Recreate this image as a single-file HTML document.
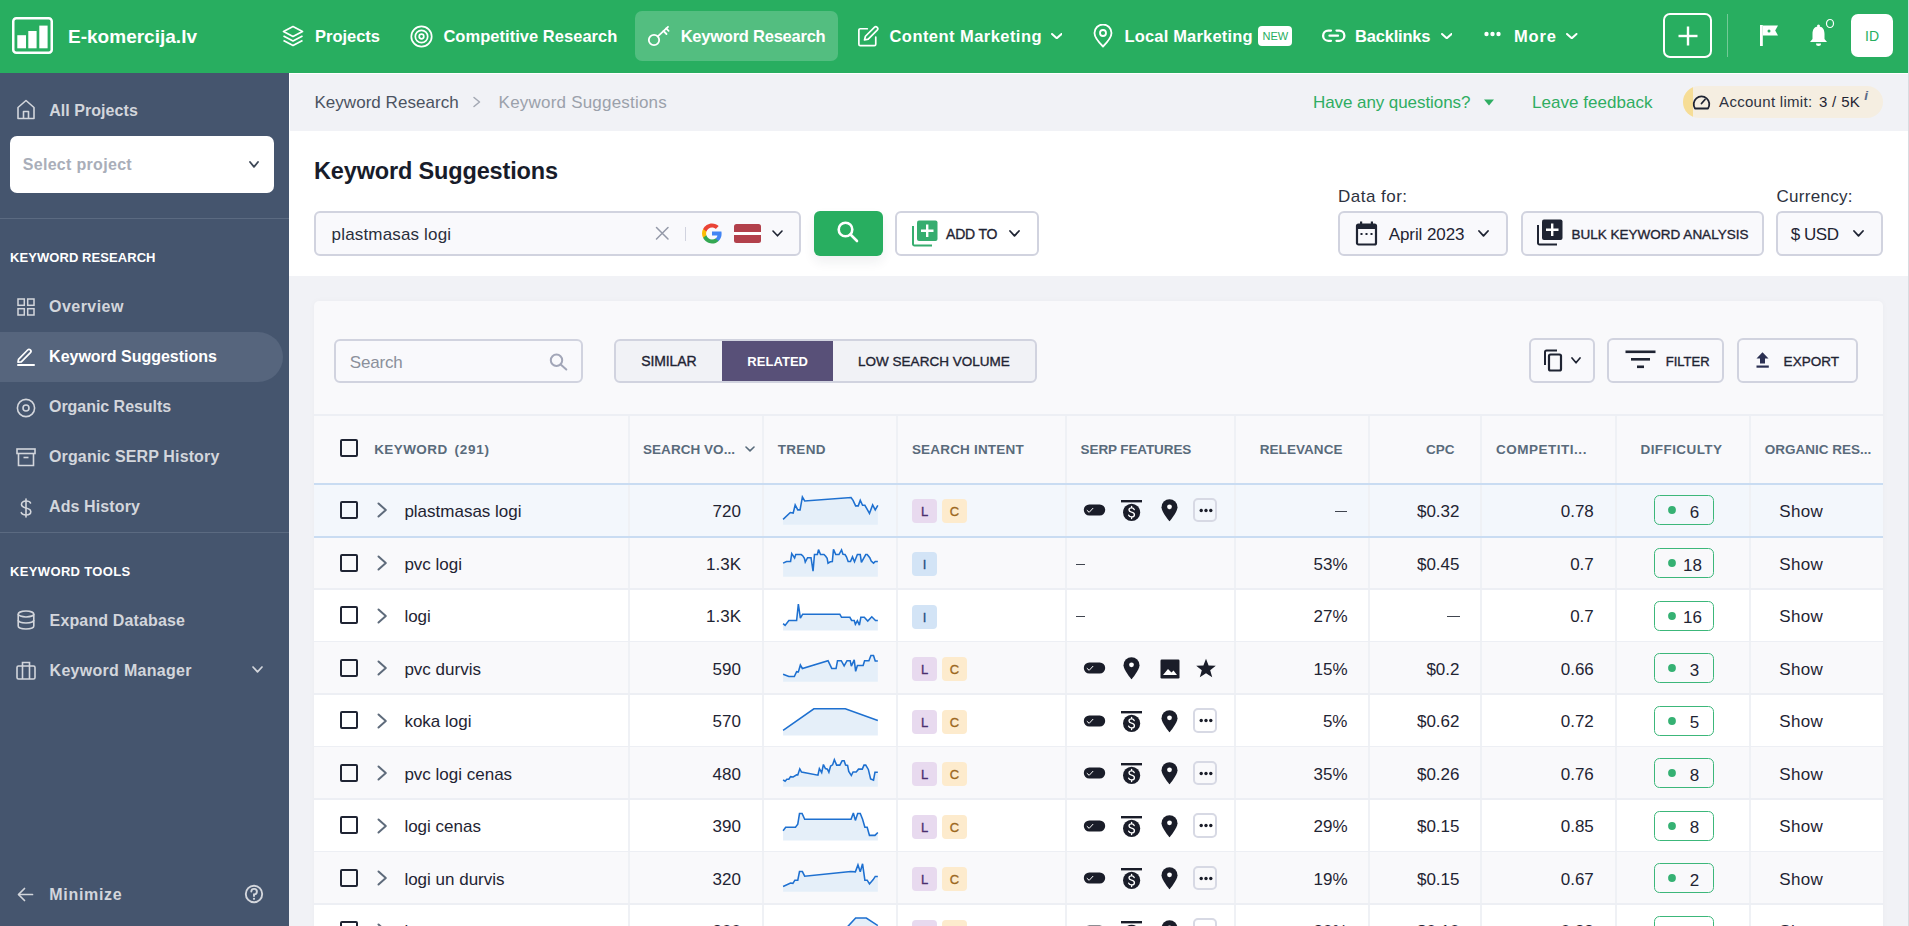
<!DOCTYPE html>
<html><head><meta charset="utf-8"><style>
html,body{margin:0;padding:0;}
body{width:1909px;height:926px;overflow:hidden;position:relative;font-family:"Liberation Sans", sans-serif;background:#f1f2f6;}
</style></head><body>
<div style="position:absolute;left:289px;top:130.5px;width:1619px;height:145.5px;background:#ffffff;"></div>
<div style="position:absolute;left:289px;top:73px;width:1619px;height:0.8px;background:#ffffff;"></div>
<div style="position:absolute;left:289px;top:73px;width:1.2px;height:58px;background:#ffffff;"></div>
<div style="position:absolute;left:1908px;top:0px;width:1px;height:926px;background:#d9dbe0;"></div>
<div style="position:absolute;left:0px;top:0px;width:1908px;height:73px;background:#28ae60;"></div>
<svg style="position:absolute;left:12px;top:17px;" width="41" height="37" viewBox="0 0 41 37"><rect x="1.25" y="1.25" width="38.5" height="34.5" rx="3" fill="none" stroke="#fff" stroke-width="2.5"/><rect x="5.3" y="18.2" width="8.7" height="13.1" fill="#fff"/><rect x="16.3" y="14" width="8.3" height="17.3" fill="#fff"/><rect x="27.3" y="8.6" width="8.3" height="22.7" fill="#fff"/></svg>
<span style="position:absolute;left:68.00px;top:26.62px;font-size:19px;line-height:19px;font-weight:700;color:#fff;letter-spacing:0.012px;white-space:pre;">E-komercija.lv</span>
<svg style="position:absolute;left:282px;top:25px;" width="22" height="22" viewBox="0 0 22 22"><g fill="none" stroke="#fff" stroke-width="1.7" stroke-linejoin="round"><path d="M11 1.5 L20.5 6.5 L11 11.5 L1.5 6.5 Z"/><path d="M1.5 11 L11 16 L20.5 11"/><path d="M1.5 15.5 L11 20.5 L20.5 15.5"/></g></svg>
<span style="position:absolute;left:315.00px;top:28.03px;font-size:16.5px;line-height:16.5px;font-weight:700;color:#fff;letter-spacing:-0.018px;white-space:pre;">Projects</span>
<svg style="position:absolute;left:410px;top:25px;" width="23" height="23" viewBox="0 0 23 23"><g fill="none" stroke="#fff" stroke-width="1.7"><circle cx="11.5" cy="11.5" r="10.2"/><circle cx="11.5" cy="11.5" r="6.2"/><circle cx="11.5" cy="11.5" r="2.3"/></g></svg>
<span style="position:absolute;left:443.40px;top:28.03px;font-size:16.5px;line-height:16.5px;font-weight:700;color:#fff;letter-spacing:0.035px;white-space:pre;">Competitive Research</span>
<div style="position:absolute;left:635px;top:11px;width:203px;height:50px;background:#53be80;border-radius:7px;"></div>
<svg style="position:absolute;left:647px;top:25px;" width="24" height="22" viewBox="0 0 24 22"><g fill="none" stroke="#fff" stroke-width="1.8" stroke-linecap="round"><circle cx="7" cy="15" r="5.2"/><path d="M10.8 11.3 L21 1.8"/><path d="M16.5 6 L19.5 9"/><path d="M19.2 3.4 L21.6 5.8"/></g></svg>
<span style="position:absolute;left:680.70px;top:28.03px;font-size:16.5px;line-height:16.5px;font-weight:700;color:#fff;letter-spacing:-0.239px;white-space:pre;">Keyword Research</span>
<svg style="position:absolute;left:857px;top:24.8px;" width="22.5" height="22.5" viewBox="0 0 24 24"><g fill="none" stroke="#fff" stroke-width="1.8" stroke-linecap="round" stroke-linejoin="round"><path d="M11 4 H3.5 A1.5 1.5 0 0 0 2 5.5 V20.5 A1.5 1.5 0 0 0 3.5 22 H18.5 A1.5 1.5 0 0 0 20 20.5 V13"/><path d="M18.5 2.5 A2.1 2.1 0 0 1 21.5 5.5 L12 15 L8 16 L9 12 Z"/></g></svg>
<span style="position:absolute;left:889.50px;top:28.03px;font-size:16.5px;line-height:16.5px;font-weight:700;color:#fff;letter-spacing:0.447px;white-space:pre;">Content Marketing</span>
<svg style="position:absolute;left:1050.5px;top:32.8px;" width="11.5" height="6.5" viewBox="0 0 11.5 6.5"><path d="M1 1 L5.75 5.3 L10.5 1" fill="none" stroke="#fff" stroke-width="2" stroke-linecap="round" stroke-linejoin="round"/></svg>
<svg style="position:absolute;left:1092px;top:24px;" width="22" height="24" viewBox="0 0 22 24"><g fill="none" stroke="#fff" stroke-width="1.8"><path d="M11 22.5 C11 22.5 2.5 14 2.5 9 A8.5 8.5 0 0 1 19.5 9 C19.5 14 11 22.5 11 22.5 Z" stroke-linejoin="round"/><circle cx="11" cy="9" r="3"/></g></svg>
<span style="position:absolute;left:1124.50px;top:28.03px;font-size:16.5px;line-height:16.5px;font-weight:700;color:#fff;letter-spacing:0.170px;white-space:pre;">Local Marketing</span>
<div style="position:absolute;left:1258px;top:26px;width:34px;height:20px;background:#fff;border-radius:4px;"></div>
<span style="position:absolute;left:1262.46px;top:31.19px;font-size:11px;line-height:11px;font-weight:400;color:#28ae60;white-space:pre;">NEW</span>
<svg style="position:absolute;left:1320.5px;top:26px;" width="26" height="20" viewBox="0 0 26 20"><g fill="none" stroke="#fff" stroke-width="2.3" stroke-linecap="round"><path d="M10 4.6 H7.2 A5.1 5.1 0 0 0 7.2 14.8 H10"/><path d="M15.5 4.6 H18.3 A5.1 5.1 0 0 1 18.3 14.8 H15.5"/><path d="M8.5 9.7 H17"/></g></svg>
<span style="position:absolute;left:1355.00px;top:28.03px;font-size:16.5px;line-height:16.5px;font-weight:700;color:#fff;letter-spacing:-0.193px;white-space:pre;">Backlinks</span>
<svg style="position:absolute;left:1440.5px;top:32.8px;" width="11.5" height="6.5" viewBox="0 0 11.5 6.5"><path d="M1 1 L5.75 5.3 L10.5 1" fill="none" stroke="#fff" stroke-width="2" stroke-linecap="round" stroke-linejoin="round"/></svg>
<svg style="position:absolute;left:1484px;top:31px;" width="17" height="6" viewBox="0 0 17 6"><g fill="#fff"><circle cx="2.5" cy="3" r="2.2"/><circle cx="8.5" cy="3" r="2.2"/><circle cx="14.5" cy="3" r="2.2"/></g></svg>
<span style="position:absolute;left:1514.00px;top:28.03px;font-size:16.5px;line-height:16.5px;font-weight:700;color:#fff;letter-spacing:0.859px;white-space:pre;">More</span>
<svg style="position:absolute;left:1566px;top:32.8px;" width="11.5" height="6.5" viewBox="0 0 11.5 6.5"><path d="M1 1 L5.75 5.3 L10.5 1" fill="none" stroke="#fff" stroke-width="2" stroke-linecap="round" stroke-linejoin="round"/></svg>
<div style="position:absolute;left:1663px;top:13px;width:49px;height:45px;background:transparent;border:2px solid #fff;box-sizing:border-box;border-radius:7px;"></div>
<svg style="position:absolute;left:1677px;top:25px;" width="22" height="22" viewBox="0 0 22 22"><g stroke="#fff" stroke-width="2.4"><path d="M11 1.5 V20.5"/><path d="M1.5 11 H20.5"/></g></svg>
<div style="position:absolute;left:1727px;top:14px;width:1px;height:43px;background:rgba(255,255,255,0.35);"></div>
<svg style="position:absolute;left:1759px;top:24px;" width="20" height="23" viewBox="0 0 20 23"><path d="M1 1 H3.8 V22 H1 Z" fill="#fff"/><path d="M3.8 1.5 H19 L16.2 6.5 L19 11.5 H3.8 Z" fill="#fff"/><circle cx="10" cy="7" r="1.5" fill="#28ae60"/></svg>
<svg style="position:absolute;left:1808px;top:24px;" width="21" height="23" viewBox="0 0 21 23"><path d="M10.5 2.5 C6 2.5 4.5 6 4.5 10 V15 L2 18 H19 L16.5 15 V10 C16.5 6 15 2.5 10.5 2.5 Z" fill="#fff"/><circle cx="10.5" cy="2" r="1.5" fill="#fff"/><path d="M8 19.5 A2.5 2.5 0 0 0 13 19.5 Z" fill="#fff"/></svg>
<svg style="position:absolute;left:1825px;top:18px;" width="11" height="11" viewBox="0 0 11 11"><ellipse cx="5" cy="5.5" rx="3.5" ry="4" fill="none" stroke="#fff" stroke-width="1.2"/></svg>
<div style="position:absolute;left:1851px;top:14px;width:42px;height:43px;background:#fff;border-radius:7px;"></div>
<span style="position:absolute;left:1865.00px;top:29.15px;font-size:14px;line-height:14px;font-weight:400;color:#28ae60;white-space:pre;">ID</span>
<div style="position:absolute;left:0px;top:73px;width:289px;height:853px;background:#45556e;"></div>
<svg style="position:absolute;left:16px;top:99px;" width="20" height="21" viewBox="0 0 20 21"><path d="M2 19.5 V8.5 L10 1.5 L18 8.5 V19.5 Z M7.5 19.5 V12.5 H12.5 V19.5" fill="none" stroke="#d3d6dc" stroke-width="1.6" stroke-linejoin="round"/></svg>
<span style="position:absolute;left:49.20px;top:102.76px;font-size:16px;line-height:16px;font-weight:700;color:#d3d6dc;letter-spacing:0.052px;white-space:pre;">All Projects</span>
<div style="position:absolute;left:10px;top:136px;width:264px;height:57px;background:#fff;border-radius:7px;"></div>
<span style="position:absolute;left:22.70px;top:157.46px;font-size:16px;line-height:16px;font-weight:700;color:#a9aeb9;letter-spacing:0.312px;white-space:pre;">Select project</span>
<svg style="position:absolute;left:249px;top:161px;" width="10" height="7" viewBox="0 0 10 7"><path d="M1 1 L5.0 5.8 L9 1" fill="none" stroke="#3d4756" stroke-width="1.8" stroke-linecap="round" stroke-linejoin="round"/></svg>
<div style="position:absolute;left:0px;top:218px;width:289px;height:1px;background:#5b6a81;"></div>
<span style="position:absolute;left:10.10px;top:250.50px;font-size:13px;line-height:13px;font-weight:700;color:#fff;letter-spacing:0.062px;white-space:pre;">KEYWORD RESEARCH</span>
<div style="position:absolute;left:0px;top:332px;width:283px;height:50px;background:#56657d;border-radius:0 25px 25px 0;"></div>
<svg style="position:absolute;left:17px;top:298px;" width="18" height="18" viewBox="0 0 18 18"><g fill="none" stroke="#d3d6dc" stroke-width="1.5"><rect x="1" y="1" width="6.3" height="6.3"/><rect x="10.7" y="1" width="6.3" height="6.3"/><rect x="1" y="10.7" width="6.3" height="6.3"/><rect x="10.7" y="10.7" width="6.3" height="6.3"/></g></svg>
<span style="position:absolute;left:49.10px;top:299.46px;font-size:16px;line-height:16px;font-weight:700;color:#d3d6dc;letter-spacing:0.449px;white-space:pre;">Overview</span>
<svg style="position:absolute;left:16px;top:347px;" width="20" height="20" viewBox="0 0 20 20"><g fill="none" stroke="#fff" stroke-width="1.7" stroke-linejoin="round" stroke-linecap="round"><path d="M2.5 12.3 L11.6 3 A1.9 1.9 0 0 1 14.4 5.7 L5.3 14.8 L2 15.2 Z"/></g><path d="M2 18 H18" stroke="#fff" stroke-width="2" stroke-linecap="round"/></svg>
<span style="position:absolute;left:49.10px;top:349.46px;font-size:16px;line-height:16px;font-weight:700;color:#fff;letter-spacing:-0.013px;white-space:pre;">Keyword Suggestions</span>
<svg style="position:absolute;left:16px;top:398px;" width="20" height="20" viewBox="0 0 20 20"><g fill="none" stroke="#d3d6dc" stroke-width="1.6"><circle cx="10" cy="10" r="8.6"/><circle cx="10" cy="10" r="3"/></g></svg>
<span style="position:absolute;left:49.00px;top:399.46px;font-size:16px;line-height:16px;font-weight:700;color:#d3d6dc;letter-spacing:-0.036px;white-space:pre;">Organic Results</span>
<svg style="position:absolute;left:16px;top:448px;" width="20" height="19" viewBox="0 0 20 19"><g fill="none" stroke="#d3d6dc" stroke-width="1.6"><rect x="1" y="1" width="18" height="4.5"/><path d="M2.5 5.5 V17.5 H17.5 V5.5"/><path d="M7.5 9.5 H12.5"/></g></svg>
<span style="position:absolute;left:49.00px;top:449.46px;font-size:16px;line-height:16px;font-weight:700;color:#d3d6dc;letter-spacing:0.133px;white-space:pre;">Organic SERP History</span>
<svg style="position:absolute;left:18px;top:498px;" width="16" height="20" viewBox="0 0 16 20"><g fill="none" stroke="#d3d6dc" stroke-width="1.6" stroke-linecap="round"><path d="M8 1 V19"/><path d="M12.5 5 C12 3.5 10.5 3 8 3 C5 3 3.5 4.5 3.5 6.5 C3.5 8.5 5 9.3 8 10 C11 10.7 12.8 11.5 12.8 13.5 C12.8 15.5 11 17 8 17 C5.5 17 4 16.3 3.3 14.7"/></g></svg>
<span style="position:absolute;left:49.00px;top:499.46px;font-size:16px;line-height:16px;font-weight:700;color:#d3d6dc;letter-spacing:0.110px;white-space:pre;">Ads History</span>
<div style="position:absolute;left:0px;top:532px;width:289px;height:1px;background:#5b6a81;"></div>
<span style="position:absolute;left:10.10px;top:565.40px;font-size:13px;line-height:13px;font-weight:700;color:#fff;letter-spacing:0.338px;white-space:pre;">KEYWORD TOOLS</span>
<svg style="position:absolute;left:16px;top:610px;" width="20" height="20" viewBox="0 0 20 20"><g fill="none" stroke="#d3d6dc" stroke-width="1.6"><ellipse cx="10" cy="4" rx="7.8" ry="3"/><path d="M2.2 4 V16 C2.2 17.7 5.7 19 10 19 C14.3 19 17.8 17.7 17.8 16 V4"/><path d="M2.2 10 C2.2 11.7 5.7 13 10 13 C14.3 13 17.8 11.7 17.8 10"/></g></svg>
<span style="position:absolute;left:49.60px;top:613.46px;font-size:16px;line-height:16px;font-weight:700;color:#d3d6dc;letter-spacing:0.144px;white-space:pre;">Expand Database</span>
<svg style="position:absolute;left:16px;top:661px;" width="20" height="19" viewBox="0 0 20 19"><g fill="none" stroke="#d3d6dc" stroke-width="1.6"><rect x="1" y="5" width="18" height="13" rx="1.5"/><path d="M6.5 5 V1.5 H13.5 V5"/><path d="M6.5 5 V18 M13.5 5 V18"/></g></svg>
<span style="position:absolute;left:49.60px;top:663.46px;font-size:16px;line-height:16px;font-weight:700;color:#d3d6dc;letter-spacing:0.285px;white-space:pre;">Keyword Manager</span>
<svg style="position:absolute;left:252px;top:666px;" width="11" height="7" viewBox="0 0 11 7"><path d="M1 1 L5.5 5.8 L10 1" fill="none" stroke="#d3d6dc" stroke-width="1.7" stroke-linecap="round" stroke-linejoin="round"/></svg>
<svg style="position:absolute;left:17px;top:887px;" width="17" height="15" viewBox="0 0 17 15"><g fill="none" stroke="#d3d6dc" stroke-width="1.7" stroke-linecap="round" stroke-linejoin="round"><path d="M15.5 7.5 H2"/><path d="M7.5 1.5 L1.5 7.5 L7.5 13.5"/></g></svg>
<span style="position:absolute;left:49.30px;top:887.46px;font-size:16px;line-height:16px;font-weight:700;color:#d3d6dc;letter-spacing:0.691px;white-space:pre;">Minimize</span>
<svg style="position:absolute;left:244px;top:884px;" width="20" height="20" viewBox="0 0 20 20"><g fill="none" stroke="#d3d6dc" stroke-width="1.9" stroke-linecap="round"><circle cx="10" cy="10" r="8.2"/><path d="M7.3 7.5 A2.8 2.8 0 1 1 10 10.5 V12"/></g><circle cx="10" cy="14.8" r="1.1" fill="#d3d6dc"/></svg>
<span style="position:absolute;left:314.40px;top:93.61px;font-size:17px;line-height:17px;font-weight:400;color:#4b5261;letter-spacing:0.045px;white-space:pre;">Keyword Research</span>
<svg style="position:absolute;left:472px;top:96px;" width="10" height="12" viewBox="0 0 10 12"><path d="M2 1.5 L7.5 6 L2 10.5" fill="none" stroke="#a3a8b3" stroke-width="1.5" stroke-linecap="round" stroke-linejoin="round"/></svg>
<span style="position:absolute;left:498.60px;top:93.61px;font-size:17px;line-height:17px;font-weight:400;color:#9ba1ab;letter-spacing:0.209px;white-space:pre;">Keyword Suggestions</span>
<span style="position:absolute;left:1313.00px;top:93.91px;font-size:17px;line-height:17px;font-weight:400;color:#2fad62;letter-spacing:-0.077px;white-space:pre;">Have any questions?</span>
<svg style="position:absolute;left:1483px;top:98.5px;" width="12" height="8" viewBox="0 0 12 8"><path d="M1 0.5 H11 L6 6.5 Z" fill="#2fad62"/></svg>
<span style="position:absolute;left:1532.00px;top:93.91px;font-size:17px;line-height:17px;font-weight:400;color:#2fad62;letter-spacing:0.043px;white-space:pre;">Leave feedback</span>
<div style="position:absolute;left:1683px;top:86px;width:200px;height:32px;border-radius:16px;background:#f5eee1;overflow:hidden"><div style="position:absolute;left:0;top:0;width:10px;height:32px;background:#f6dd96"></div></div>
<svg style="position:absolute;left:1692px;top:93px;" width="19" height="17" viewBox="0 0 19 17"><g fill="none" stroke="#1f2433" stroke-width="1.8" stroke-linecap="round"><path d="M3 15.5 A7.8 7.8 0 1 1 16 15.5 Z" stroke-linejoin="round"/><path d="M9.5 10.5 L13 6.5"/></g></svg>
<span style="position:absolute;left:1719.10px;top:94.30px;font-size:15px;line-height:15px;font-weight:400;color:#2d3240;letter-spacing:0.292px;white-space:pre;">Account limit:</span>
<span style="position:absolute;left:1818.90px;top:94.30px;font-size:15px;line-height:15px;font-weight:400;color:#1f2433;letter-spacing:0.359px;white-space:pre;">3 / 5K</span>
<span style="position:absolute;left:1864.20px;top:89.07px;font-size:13.5px;line-height:13.5px;font-weight:700;color:#5b6b8a;white-space:pre;font-style:italic;">i</span>
<span style="position:absolute;left:314.00px;top:159.91px;font-size:23.5px;line-height:23.5px;font-weight:700;color:#181c2a;letter-spacing:-0.155px;white-space:pre;">Keyword Suggestions</span>
<div style="position:absolute;left:314px;top:211px;width:487px;height:45px;background:#f9f9fc;border:2px solid #d1d3df;box-sizing:border-box;border-radius:6px;"></div>
<span style="position:absolute;left:331.60px;top:225.61px;font-size:17px;line-height:17px;font-weight:400;color:#2a2f3c;letter-spacing:0.166px;white-space:pre;">plastmasas logi</span>
<svg style="position:absolute;left:655px;top:226px;" width="15" height="15" viewBox="0 0 15 15"><g stroke="#9499a8" stroke-width="1.5" stroke-linecap="round"><path d="M1.5 1.5 L13 13 M13 1.5 L1.5 13"/></g></svg>
<div style="position:absolute;left:685px;top:227px;width:1px;height:14px;background:#d1d3df;"></div>
<svg style="position:absolute;left:701px;top:223px;" width="22" height="21" viewBox="0 0 22 21"><path d="M20.6 10.7 C20.6 9.9 20.5 9.3 20.4 8.6 H11 V12.4 H16.4 C16.2 13.6 15.5 14.7 14.4 15.4 V17.9 H17.6 C19.5 16.2 20.6 13.700 20.6 10.7 Z" fill="#4285F4"/><path d="M11 20.5 C13.7 20.5 16 19.600 17.6 17.9 L14.4 15.4 C13.5 16 12.400 16.4 11 16.4 C8.4 16.4 6.2 14.600 5.4 12.2 H2.100 V14.8 C3.700 18.100 7.1 20.5 11 20.5 Z" fill="#34A853"/><path d="M5.4 12.2 C5.2 11.6 5.1 11 5.1 10.4 C5.1 9.8 5.2 9.2 5.4 8.6 V6 H2.1 C1.4 7.3 1 8.8 1 10.400 C1 12 1.400 13.500 2.100 14.800 Z" fill="#FBBC05"/><path d="M11 4.4 C12.5 4.4 13.8 4.900 14.800 5.900 L17.700 3 C16 1.4 13.700 0.4 11 0.4 C7.1 0.4 3.7 2.700 2.100 6 L5.400 8.600 C6.200 6.200 8.4 4.4 11 4.4 Z" fill="#EA4335"/></svg>
<div style="position:absolute;left:734px;top:224px;width:27px;height:19px;border-radius:2.5px;overflow:hidden;background:#b2404b"><div style="position:absolute;left:0;top:7.8px;width:27px;height:3.4px;background:#fff"></div></div>
<svg style="position:absolute;left:771.5px;top:229.5px;" width="11" height="7" viewBox="0 0 11 7"><path d="M1 1 L5.5 5.8 L10 1" fill="none" stroke="#1f2433" stroke-width="1.6" stroke-linecap="round" stroke-linejoin="round"/></svg>
<div style="position:absolute;left:814px;top:211px;width:69px;height:45px;background:#28ae60;border-radius:6px;box-shadow:0 6px 12px rgba(30,40,60,0.07);"></div>
<svg style="position:absolute;left:837px;top:221px;" width="22" height="23" viewBox="0 0 22 23"><g fill="none" stroke="#fff" stroke-width="2.6" stroke-linecap="round"><circle cx="8.5" cy="8.5" r="6.8"/><path d="M13.5 13.5 L20 20"/></g></svg>
<div style="position:absolute;left:895px;top:211px;width:144px;height:45px;background:#ffffff;border:2px solid #d1d3df;box-sizing:border-box;border-radius:6px;"></div>
<svg style="position:absolute;left:911px;top:219.3px;" width="28" height="28" viewBox="0 0 28 28"><path d="M2 7 V25 A1.5 1.5 0 0 0 3.5 26.5 H21" fill="none" stroke="#36ad6f" stroke-width="2"/><rect x="6" y="1.5" width="20.5" height="20.5" rx="2" fill="#36ad6f"/><path d="M16.2 5.5 V18 M10 11.7 H22.5" stroke="#fff" stroke-width="2.4"/></svg>
<span style="position:absolute;left:946.00px;top:227.15px;font-size:14px;line-height:14px;font-weight:400;color:#1f2433;letter-spacing:-0.178px;white-space:pre;-webkit-text-stroke:0.35px #1f2433;">ADD TO</span>
<svg style="position:absolute;left:1009px;top:230px;" width="11" height="7" viewBox="0 0 11 7"><path d="M1 1 L5.5 5.8 L10 1" fill="none" stroke="#1f2433" stroke-width="1.8" stroke-linecap="round" stroke-linejoin="round"/></svg>
<span style="position:absolute;left:1338.00px;top:187.61px;font-size:17px;line-height:17px;font-weight:400;color:#2d3240;letter-spacing:0.475px;white-space:pre;">Data for:</span>
<div style="position:absolute;left:1338px;top:211px;width:170px;height:45px;background:#f9f9fc;border:2px solid #d1d3df;box-sizing:border-box;border-radius:6px;"></div>
<svg style="position:absolute;left:1355px;top:221px;" width="25" height="26" viewBox="0 0 25 26"><g fill="#1f2433"><rect x="5" y="0.5" width="2.2" height="5"/><rect x="15.8" y="0.5" width="2.2" height="5"/></g><rect x="2" y="3.5" width="19" height="20" rx="1.5" fill="none" stroke="#1f2433" stroke-width="2.2"/><rect x="2" y="3.5" width="19" height="4.5" fill="#1f2433"/><g fill="#1f2433"><rect x="5.5" y="12" width="2" height="2"/><rect x="10.5" y="12" width="2" height="2"/><rect x="15.5" y="12" width="2" height="2"/></g></svg>
<span style="position:absolute;left:1388.70px;top:225.91px;font-size:17px;line-height:17px;font-weight:400;color:#1f2433;letter-spacing:-0.085px;white-space:pre;">April 2023</span>
<svg style="position:absolute;left:1478px;top:230px;" width="11" height="7" viewBox="0 0 11 7"><path d="M1 1 L5.5 5.8 L10 1" fill="none" stroke="#1f2433" stroke-width="1.8" stroke-linecap="round" stroke-linejoin="round"/></svg>
<div style="position:absolute;left:1521px;top:211px;width:243px;height:45px;background:#f9f9fc;border:2px solid #d1d3df;box-sizing:border-box;border-radius:6px;"></div>
<svg style="position:absolute;left:1536px;top:218px;" width="28" height="28" viewBox="0 0 28 28"><path d="M2 7 V25 A1.5 1.5 0 0 0 3.5 26.5 H21" fill="none" stroke="#1f2433" stroke-width="2"/><rect x="6" y="1.5" width="20.5" height="20.5" rx="2" fill="#1f2433"/><path d="M16.2 5.5 V18 M10 11.7 H22.5" stroke="#fff" stroke-width="2.4"/></svg>
<span style="position:absolute;left:1571.60px;top:228.27px;font-size:13.5px;line-height:13.5px;font-weight:400;color:#1f2433;white-space:pre;-webkit-text-stroke:0.35px #1f2433;">BULK KEYWORD ANALYSIS</span>
<span style="position:absolute;left:1776.50px;top:187.61px;font-size:17px;line-height:17px;font-weight:400;color:#2d3240;letter-spacing:0.289px;white-space:pre;">Currency:</span>
<div style="position:absolute;left:1776px;top:211px;width:107px;height:45px;background:#f9f9fc;border:2px solid #d1d3df;box-sizing:border-box;border-radius:6px;"></div>
<span style="position:absolute;left:1790.70px;top:225.91px;font-size:17px;line-height:17px;font-weight:400;color:#1f2433;letter-spacing:-0.445px;white-space:pre;">$ USD</span>
<svg style="position:absolute;left:1853px;top:230px;" width="11" height="7" viewBox="0 0 11 7"><path d="M1 1 L5.5 5.8 L10 1" fill="none" stroke="#1f2433" stroke-width="1.8" stroke-linecap="round" stroke-linejoin="round"/></svg>
<div style="position:absolute;left:314px;top:301px;width:1569px;height:640px;background:#f9f9fb;border-radius:5px;box-shadow:0 0 6px rgba(0,0,0,0.03);"></div>
<div style="position:absolute;left:333.5px;top:338.5px;width:249.5px;height:44.3px;background:#f9f9fc;border:2px solid #d1d3df;box-sizing:border-box;border-radius:6px;"></div>
<span style="position:absolute;left:349.80px;top:354.11px;font-size:17px;line-height:17px;font-weight:400;color:#8b909b;letter-spacing:-0.175px;white-space:pre;">Search</span>
<svg style="position:absolute;left:549px;top:352.5px;" width="20" height="20" viewBox="0 0 20 20"><g fill="none" stroke="#a2a6b8" stroke-width="2" stroke-linecap="round"><circle cx="7.5" cy="7.2" r="5.7"/><path d="M11.7 11.5 L17.3 16.5"/></g></svg>
<div style="position:absolute;left:614px;top:339px;width:423px;height:44px;background:#f1f2f6;border:2px solid #d1d3df;box-sizing:border-box;border-radius:6px;"></div>
<div style="position:absolute;left:722px;top:341px;width:111px;height:40px;background:#585078;"></div>
<span style="position:absolute;left:641.20px;top:354.25px;font-size:14px;line-height:14px;font-weight:400;color:#1f2433;letter-spacing:-0.086px;white-space:pre;-webkit-text-stroke:0.35px #1f2433;">SIMILAR</span>
<span style="position:absolute;left:747.30px;top:355.10px;font-size:13px;line-height:13px;font-weight:700;color:#fff;letter-spacing:0.044px;white-space:pre;">RELATED</span>
<span style="position:absolute;left:858.00px;top:354.67px;font-size:13.5px;line-height:13.5px;font-weight:400;color:#1f2433;letter-spacing:0.017px;white-space:pre;-webkit-text-stroke:0.35px #1f2433;">LOW SEARCH VOLUME</span>
<div style="position:absolute;left:1529px;top:338px;width:66px;height:45px;background:#f9f9fc;border:2px solid #d1d3df;box-sizing:border-box;border-radius:6px;"></div>
<svg style="position:absolute;left:1543px;top:349px;" width="22" height="24" viewBox="0 0 22 24"><path d="M2 16 V3 A1.5 1.5 0 0 1 3.5 1.5 H14" fill="none" stroke="#1f2433" stroke-width="2"/><rect x="6" y="5.5" width="12" height="16" rx="1.5" fill="none" stroke="#1f2433" stroke-width="2.2"/></svg>
<svg style="position:absolute;left:1571px;top:357px;" width="10" height="7" viewBox="0 0 10 7"><path d="M1 1 L5.0 5.8 L9 1" fill="none" stroke="#1f2433" stroke-width="1.7" stroke-linecap="round" stroke-linejoin="round"/></svg>
<div style="position:absolute;left:1607px;top:338px;width:117px;height:45px;background:#f9f9fc;border:2px solid #d1d3df;box-sizing:border-box;border-radius:6px;"></div>
<svg style="position:absolute;left:1625px;top:350px;" width="31" height="20" viewBox="0 0 31 20"><g fill="#1f2433"><rect x="0.5" y="0.5" width="30" height="2.6"/><rect x="6" y="8" width="19" height="2.6"/><rect x="12" y="15.5" width="7" height="2.6"/></g></svg>
<span style="position:absolute;left:1665.70px;top:355.10px;font-size:13px;line-height:13px;font-weight:400;color:#1f2433;letter-spacing:0.034px;white-space:pre;-webkit-text-stroke:0.35px #1f2433;">FILTER</span>
<div style="position:absolute;left:1737px;top:338px;width:121px;height:45px;background:#f9f9fc;border:2px solid #d1d3df;box-sizing:border-box;border-radius:6px;"></div>
<svg style="position:absolute;left:1755px;top:351px;" width="15" height="18" viewBox="0 0 15 18"><path d="M7.5 1.3 L13.5 7.5 H10 V12.5 H5 V7.5 H1.5 Z" fill="#2b3052"/><rect x="1.5" y="14.5" width="12.3" height="2.2" fill="#2b3052"/></svg>
<span style="position:absolute;left:1783.60px;top:354.67px;font-size:13.5px;line-height:13.5px;font-weight:400;color:#1f2433;letter-spacing:0.027px;white-space:pre;-webkit-text-stroke:0.35px #1f2433;">EXPORT</span>
<div style="position:absolute;left:314px;top:414px;width:1569px;height:2px;background:#edeff4;"></div>
<div style="position:absolute;left:340px;top:439px;width:18px;height:18px;background:transparent;border:2px solid #1f2433;box-sizing:border-box;border-radius:2px;"></div>
<span style="position:absolute;left:374.20px;top:442.87px;font-size:13.5px;line-height:13.5px;font-weight:700;color:#596b7b;letter-spacing:0.417px;white-space:pre;">KEYWORD</span>
<span style="position:absolute;left:454.50px;top:442.87px;font-size:13.5px;line-height:13.5px;font-weight:700;color:#596b7b;letter-spacing:0.746px;white-space:pre;">(291)</span>
<span style="position:absolute;left:643.00px;top:442.87px;font-size:13.5px;line-height:13.5px;font-weight:700;color:#596b7b;letter-spacing:0.044px;white-space:pre;">SEARCH VO...</span>
<svg style="position:absolute;left:745px;top:446px;" width="10" height="6" viewBox="0 0 10 6"><path d="M1 1 L5.0 4.8 L9 1" fill="none" stroke="#596b7b" stroke-width="1.6" stroke-linecap="round" stroke-linejoin="round"/></svg>
<span style="position:absolute;left:777.70px;top:442.87px;font-size:13.5px;line-height:13.5px;font-weight:700;color:#596b7b;letter-spacing:0.325px;white-space:pre;">TREND</span>
<span style="position:absolute;left:911.90px;top:442.87px;font-size:13.5px;line-height:13.5px;font-weight:700;color:#596b7b;letter-spacing:0.190px;white-space:pre;">SEARCH INTENT</span>
<span style="position:absolute;left:1080.60px;top:442.87px;font-size:13.5px;line-height:13.5px;font-weight:700;color:#596b7b;letter-spacing:-0.111px;white-space:pre;">SERP FEATURES</span>
<span style="position:absolute;left:1259.70px;top:442.87px;font-size:13.5px;line-height:13.5px;font-weight:700;color:#596b7b;letter-spacing:0.067px;white-space:pre;">RELEVANCE</span>
<span style="position:absolute;left:1426.00px;top:442.87px;font-size:13.5px;line-height:13.5px;font-weight:700;color:#596b7b;letter-spacing:0.042px;white-space:pre;">CPC</span>
<span style="position:absolute;left:1496.00px;top:442.87px;font-size:13.5px;line-height:13.5px;font-weight:700;color:#596b7b;letter-spacing:0.512px;white-space:pre;">COMPETITI...</span>
<span style="position:absolute;left:1640.50px;top:442.87px;font-size:13.5px;line-height:13.5px;font-weight:700;color:#596b7b;letter-spacing:0.417px;white-space:pre;">DIFFICULTY</span>
<span style="position:absolute;left:1764.70px;top:442.87px;font-size:13.5px;line-height:13.5px;font-weight:700;color:#596b7b;white-space:pre;">ORGANIC RES...</span>
<div style="position:absolute;left:314px;top:484px;width:1569px;height:52.5px;background:#f3f7fc;"></div>
<div style="position:absolute;left:314px;top:537px;width:1569px;height:52.5px;background:#f9f9fb;"></div>
<div style="position:absolute;left:314px;top:589.0px;width:1569px;height:52.5px;background:#ffffff;"></div>
<div style="position:absolute;left:314px;top:641.5px;width:1569px;height:52.5px;background:#f9f9fb;"></div>
<div style="position:absolute;left:314px;top:694.0px;width:1569px;height:52.5px;background:#ffffff;"></div>
<div style="position:absolute;left:314px;top:746.5px;width:1569px;height:52.5px;background:#f9f9fb;"></div>
<div style="position:absolute;left:314px;top:799.0px;width:1569px;height:52.5px;background:#ffffff;"></div>
<div style="position:absolute;left:314px;top:851.5px;width:1569px;height:52.5px;background:#f9f9fb;"></div>
<div style="position:absolute;left:314px;top:904.0px;width:1569px;height:52.5px;background:#ffffff;"></div>
<div style="position:absolute;left:628.2px;top:416px;width:1.7px;height:510px;background:#eff1f5;"></div>
<div style="position:absolute;left:762.2px;top:416px;width:1.7px;height:510px;background:#eff1f5;"></div>
<div style="position:absolute;left:896.2px;top:416px;width:1.7px;height:510px;background:#eff1f5;"></div>
<div style="position:absolute;left:1065.2px;top:416px;width:1.7px;height:510px;background:#eff1f5;"></div>
<div style="position:absolute;left:1234.2px;top:416px;width:1.7px;height:510px;background:#eff1f5;"></div>
<div style="position:absolute;left:1368.2px;top:416px;width:1.7px;height:510px;background:#eff1f5;"></div>
<div style="position:absolute;left:1480.2px;top:416px;width:1.7px;height:510px;background:#eff1f5;"></div>
<div style="position:absolute;left:1615.2px;top:416px;width:1.7px;height:510px;background:#eff1f5;"></div>
<div style="position:absolute;left:1749.2px;top:416px;width:1.7px;height:510px;background:#eff1f5;"></div>
<div style="position:absolute;left:314px;top:483.3px;width:1569px;height:2px;background:#c9dcf2;"></div>
<div style="position:absolute;left:314px;top:536.2px;width:1569px;height:2px;background:#c9dcf2;"></div>
<div style="position:absolute;left:314px;top:588.25px;width:1569px;height:1.5px;background:#edeff4;"></div>
<div style="position:absolute;left:314px;top:640.75px;width:1569px;height:1.5px;background:#edeff4;"></div>
<div style="position:absolute;left:314px;top:693.25px;width:1569px;height:1.5px;background:#edeff4;"></div>
<div style="position:absolute;left:314px;top:745.75px;width:1569px;height:1.5px;background:#edeff4;"></div>
<div style="position:absolute;left:314px;top:798.25px;width:1569px;height:1.5px;background:#edeff4;"></div>
<div style="position:absolute;left:314px;top:850.75px;width:1569px;height:1.5px;background:#edeff4;"></div>
<div style="position:absolute;left:314px;top:903.25px;width:1569px;height:1.5px;background:#edeff4;"></div>
<div style="position:absolute;left:340px;top:500.8px;width:18px;height:18px;background:transparent;border:2px solid #1f2433;box-sizing:border-box;border-radius:2px;"></div>
<svg style="position:absolute;left:376px;top:502px;" width="13" height="16" viewBox="0 0 13 16"><path d="M2.5 1.5 L9.8 8 L2.5 14.5" fill="none" stroke="#5e6b7b" stroke-width="2" stroke-linecap="round" stroke-linejoin="round"/></svg>
<span style="position:absolute;left:404.40px;top:502.61px;font-size:17px;line-height:17px;font-weight:400;color:#1f2433;white-space:pre;">plastmasas logi</span>
<span style="position:absolute;left:712.62px;top:502.61px;font-size:17px;line-height:17px;font-weight:400;color:#1f2433;white-space:pre;">720</span>
<div style="position:absolute;left:912px;top:499px;width:25px;height:24px;background:#e8daef;border-radius:4px;"></div>
<span style="position:absolute;left:920.88px;top:505.00px;font-size:13px;line-height:13px;font-weight:400;color:#4b2f6f;white-space:pre;-webkit-text-stroke:0.3px #4b2f6f;">L</span>
<div style="position:absolute;left:942px;top:499px;width:25px;height:24px;background:#fdebcd;border-radius:4px;"></div>
<span style="position:absolute;left:949.80px;top:505.00px;font-size:13px;line-height:13px;font-weight:400;color:#9c6820;white-space:pre;-webkit-text-stroke:0.3px #9c6820;">C</span>
<svg style="position:absolute;left:1083px;top:504.3px;" width="23" height="12" viewBox="0 0 23 12"><rect x="0.8" y="0.5" width="21.4" height="11" rx="5.5" fill="#1a1d29"/><path d="M3.8 6.2 L6.2 8.3 L10.2 4" fill="none" stroke="#fff" stroke-width="1"/></svg>
<svg style="position:absolute;left:1120px;top:500px;" width="22" height="22" viewBox="0 0 22 22"><rect x="1" y="-0.2" width="21" height="2.6" fill="#1a1d29"/><circle cx="11.6" cy="12.4" r="8.6" fill="#1a1d29"/><path d="M14.2 9.6 C13.8 8.5 12.8 7.9 11.6 7.9 C10 7.9 9 8.8 9 10 C9 11.3 10.2 11.8 11.6 12.2 C13.2 12.6 14.4 13.2 14.4 14.7 C14.4 16 13.2 16.9 11.6 16.9 C10.2 16.9 9.1 16.3 8.7 15.2 M11.6 6.3 V7.9 M11.6 16.9 V18.5" fill="none" stroke="#fff" stroke-width="1.35" stroke-linecap="round"/></svg>
<svg style="position:absolute;left:1160.5px;top:499.1px;" width="17" height="23" viewBox="0 0 17 23"><path d="M8.5 22.3 C8.5 22.3 0.5 13 0.5 8.2 A8 8 0 0 1 16.5 8.2 C16.5 13 8.5 22.3 8.5 22.3 Z" fill="#1a1d29"/><circle cx="8.5" cy="7.8" r="2.4" fill="#fff"/></svg>
<div style="position:absolute;left:1193.2px;top:497.7px;width:24.3px;height:24.6px;background:transparent;border:2px solid #d7d9e4;box-sizing:border-box;border-radius:5px;"></div>
<svg style="position:absolute;left:1198.5px;top:507.5px;" width="14" height="5" viewBox="0 0 14 5"><g fill="#1a1d29"><circle cx="2.2" cy="2.5" r="1.7"/><circle cx="7" cy="2.5" r="1.7"/><circle cx="11.8" cy="2.5" r="1.7"/></g></svg>
<div style="position:absolute;left:1334.5px;top:511px;width:12.5px;height:1.3px;background:#40454f;"></div>
<span style="position:absolute;left:1416.95px;top:502.61px;font-size:17px;line-height:17px;font-weight:400;color:#1f2433;white-space:pre;">$0.32</span>
<span style="position:absolute;left:1560.71px;top:502.61px;font-size:17px;line-height:17px;font-weight:400;color:#1f2433;white-space:pre;">0.78</span>
<div style="position:absolute;left:1654px;top:495.3px;width:60px;height:30px;background:transparent;border:1.5px solid #3cb77a;box-sizing:border-box;border-radius:5.5px;"></div>
<svg style="position:absolute;left:1668px;top:506px;" width="8" height="8" viewBox="0 0 8 8"><circle cx="4" cy="4" r="3.9" fill="#35b173"/></svg>
<span style="position:absolute;left:1689.77px;top:503.61px;font-size:17px;line-height:17px;font-weight:400;color:#1f2433;white-space:pre;">6</span>
<span style="position:absolute;left:1779.30px;top:502.61px;font-size:17px;line-height:17px;font-weight:400;color:#1f2433;letter-spacing:0.323px;white-space:pre;">Show</span>
<div style="position:absolute;left:340px;top:553.8px;width:18px;height:18px;background:transparent;border:2px solid #1f2433;box-sizing:border-box;border-radius:2px;"></div>
<svg style="position:absolute;left:376px;top:555px;" width="13" height="16" viewBox="0 0 13 16"><path d="M2.5 1.5 L9.8 8 L2.5 14.5" fill="none" stroke="#5e6b7b" stroke-width="2" stroke-linecap="round" stroke-linejoin="round"/></svg>
<span style="position:absolute;left:404.40px;top:555.61px;font-size:17px;line-height:17px;font-weight:400;color:#1f2433;white-space:pre;">pvc logi</span>
<span style="position:absolute;left:706.02px;top:555.61px;font-size:17px;line-height:17px;font-weight:400;color:#1f2433;white-space:pre;">1.3K</span>
<div style="position:absolute;left:912px;top:552px;width:25px;height:24px;background:#d3e4f6;border-radius:4px;"></div>
<span style="position:absolute;left:922.69px;top:558.00px;font-size:13px;line-height:13px;font-weight:400;color:#254f80;white-space:pre;-webkit-text-stroke:0.3px #254f80;">I</span>
<div style="position:absolute;left:1076px;top:564px;width:9px;height:1.3px;background:#40454f;"></div>
<span style="position:absolute;left:1313.47px;top:555.61px;font-size:17px;line-height:17px;font-weight:400;color:#1f2433;white-space:pre;">53%</span>
<span style="position:absolute;left:1416.95px;top:555.61px;font-size:17px;line-height:17px;font-weight:400;color:#1f2433;white-space:pre;">$0.45</span>
<span style="position:absolute;left:1570.16px;top:555.61px;font-size:17px;line-height:17px;font-weight:400;color:#1f2433;white-space:pre;">0.7</span>
<div style="position:absolute;left:1654px;top:548.3px;width:60px;height:30px;background:transparent;border:1.5px solid #3cb77a;box-sizing:border-box;border-radius:5.5px;"></div>
<svg style="position:absolute;left:1668px;top:559px;" width="8" height="8" viewBox="0 0 8 8"><circle cx="4" cy="4" r="3.9" fill="#35b173"/></svg>
<span style="position:absolute;left:1683.04px;top:556.61px;font-size:17px;line-height:17px;font-weight:400;color:#1f2433;white-space:pre;">18</span>
<span style="position:absolute;left:1779.30px;top:555.61px;font-size:17px;line-height:17px;font-weight:400;color:#1f2433;letter-spacing:0.323px;white-space:pre;">Show</span>
<div style="position:absolute;left:340px;top:606.3px;width:18px;height:18px;background:transparent;border:2px solid #1f2433;box-sizing:border-box;border-radius:2px;"></div>
<svg style="position:absolute;left:376px;top:607.5px;" width="13" height="16" viewBox="0 0 13 16"><path d="M2.5 1.5 L9.8 8 L2.5 14.5" fill="none" stroke="#5e6b7b" stroke-width="2" stroke-linecap="round" stroke-linejoin="round"/></svg>
<span style="position:absolute;left:404.40px;top:608.11px;font-size:17px;line-height:17px;font-weight:400;color:#1f2433;white-space:pre;">logi</span>
<span style="position:absolute;left:706.02px;top:608.11px;font-size:17px;line-height:17px;font-weight:400;color:#1f2433;white-space:pre;">1.3K</span>
<div style="position:absolute;left:912px;top:604.5px;width:25px;height:24px;background:#d3e4f6;border-radius:4px;"></div>
<span style="position:absolute;left:922.69px;top:610.50px;font-size:13px;line-height:13px;font-weight:400;color:#254f80;white-space:pre;-webkit-text-stroke:0.3px #254f80;">I</span>
<div style="position:absolute;left:1076px;top:616px;width:9px;height:1.3px;background:#40454f;"></div>
<span style="position:absolute;left:1313.47px;top:608.11px;font-size:17px;line-height:17px;font-weight:400;color:#1f2433;white-space:pre;">27%</span>
<div style="position:absolute;left:1447px;top:616px;width:12.5px;height:1.3px;background:#40454f;"></div>
<span style="position:absolute;left:1570.16px;top:608.11px;font-size:17px;line-height:17px;font-weight:400;color:#1f2433;white-space:pre;">0.7</span>
<div style="position:absolute;left:1654px;top:600.8px;width:60px;height:30px;background:transparent;border:1.5px solid #3cb77a;box-sizing:border-box;border-radius:5.5px;"></div>
<svg style="position:absolute;left:1668px;top:611.5px;" width="8" height="8" viewBox="0 0 8 8"><circle cx="4" cy="4" r="3.9" fill="#35b173"/></svg>
<span style="position:absolute;left:1683.04px;top:609.11px;font-size:17px;line-height:17px;font-weight:400;color:#1f2433;white-space:pre;">16</span>
<span style="position:absolute;left:1779.30px;top:608.11px;font-size:17px;line-height:17px;font-weight:400;color:#1f2433;letter-spacing:0.323px;white-space:pre;">Show</span>
<div style="position:absolute;left:340px;top:658.8px;width:18px;height:18px;background:transparent;border:2px solid #1f2433;box-sizing:border-box;border-radius:2px;"></div>
<svg style="position:absolute;left:376px;top:660px;" width="13" height="16" viewBox="0 0 13 16"><path d="M2.5 1.5 L9.8 8 L2.5 14.5" fill="none" stroke="#5e6b7b" stroke-width="2" stroke-linecap="round" stroke-linejoin="round"/></svg>
<span style="position:absolute;left:404.40px;top:660.61px;font-size:17px;line-height:17px;font-weight:400;color:#1f2433;white-space:pre;">pvc durvis</span>
<span style="position:absolute;left:712.62px;top:660.61px;font-size:17px;line-height:17px;font-weight:400;color:#1f2433;white-space:pre;">590</span>
<div style="position:absolute;left:912px;top:657px;width:25px;height:24px;background:#e8daef;border-radius:4px;"></div>
<span style="position:absolute;left:920.88px;top:663.00px;font-size:13px;line-height:13px;font-weight:400;color:#4b2f6f;white-space:pre;-webkit-text-stroke:0.3px #4b2f6f;">L</span>
<div style="position:absolute;left:942px;top:657px;width:25px;height:24px;background:#fdebcd;border-radius:4px;"></div>
<span style="position:absolute;left:949.80px;top:663.00px;font-size:13px;line-height:13px;font-weight:400;color:#9c6820;white-space:pre;-webkit-text-stroke:0.3px #9c6820;">C</span>
<svg style="position:absolute;left:1083px;top:662.3px;" width="23" height="12" viewBox="0 0 23 12"><rect x="0.8" y="0.5" width="21.4" height="11" rx="5.5" fill="#1a1d29"/><path d="M3.8 6.2 L6.2 8.3 L10.2 4" fill="none" stroke="#fff" stroke-width="1"/></svg>
<svg style="position:absolute;left:1123.0px;top:657.1px;" width="17" height="23" viewBox="0 0 17 23"><path d="M8.5 22.3 C8.5 22.3 0.5 13 0.5 8.2 A8 8 0 0 1 16.5 8.2 C16.5 13 8.5 22.3 8.5 22.3 Z" fill="#1a1d29"/><circle cx="8.5" cy="7.8" r="2.4" fill="#fff"/></svg>
<svg style="position:absolute;left:1160px;top:659px;" width="20" height="20" viewBox="0 0 20 20"><rect x="0.5" y="0.5" width="19" height="19" rx="1.2" fill="#1a1d29"/><path d="M3 16 L8 10 L11.5 13.5 L13.5 11.5 L17 16 Z" fill="#fff"/></svg>
<svg style="position:absolute;left:1195px;top:658px;" width="22" height="21" viewBox="0 0 22 21"><path d="M11 0.8 L13.6 7.5 L20.8 7.8 L15.2 12.3 L17.2 19.3 L11 15.3 L4.8 19.3 L6.8 12.3 L1.2 7.8 L8.4 7.5 Z" fill="#1a1d29"/></svg>
<span style="position:absolute;left:1313.47px;top:660.61px;font-size:17px;line-height:17px;font-weight:400;color:#1f2433;white-space:pre;">15%</span>
<span style="position:absolute;left:1426.41px;top:660.61px;font-size:17px;line-height:17px;font-weight:400;color:#1f2433;white-space:pre;">$0.2</span>
<span style="position:absolute;left:1560.71px;top:660.61px;font-size:17px;line-height:17px;font-weight:400;color:#1f2433;white-space:pre;">0.66</span>
<div style="position:absolute;left:1654px;top:653.3px;width:60px;height:30px;background:transparent;border:1.5px solid #3cb77a;box-sizing:border-box;border-radius:5.5px;"></div>
<svg style="position:absolute;left:1668px;top:664px;" width="8" height="8" viewBox="0 0 8 8"><circle cx="4" cy="4" r="3.9" fill="#35b173"/></svg>
<span style="position:absolute;left:1689.77px;top:661.61px;font-size:17px;line-height:17px;font-weight:400;color:#1f2433;white-space:pre;">3</span>
<span style="position:absolute;left:1779.30px;top:660.61px;font-size:17px;line-height:17px;font-weight:400;color:#1f2433;letter-spacing:0.323px;white-space:pre;">Show</span>
<div style="position:absolute;left:340px;top:711.3px;width:18px;height:18px;background:transparent;border:2px solid #1f2433;box-sizing:border-box;border-radius:2px;"></div>
<svg style="position:absolute;left:376px;top:712.5px;" width="13" height="16" viewBox="0 0 13 16"><path d="M2.5 1.5 L9.8 8 L2.5 14.5" fill="none" stroke="#5e6b7b" stroke-width="2" stroke-linecap="round" stroke-linejoin="round"/></svg>
<span style="position:absolute;left:404.40px;top:713.11px;font-size:17px;line-height:17px;font-weight:400;color:#1f2433;white-space:pre;">koka logi</span>
<span style="position:absolute;left:712.62px;top:713.11px;font-size:17px;line-height:17px;font-weight:400;color:#1f2433;white-space:pre;">570</span>
<div style="position:absolute;left:912px;top:709.5px;width:25px;height:24px;background:#e8daef;border-radius:4px;"></div>
<span style="position:absolute;left:920.88px;top:715.50px;font-size:13px;line-height:13px;font-weight:400;color:#4b2f6f;white-space:pre;-webkit-text-stroke:0.3px #4b2f6f;">L</span>
<div style="position:absolute;left:942px;top:709.5px;width:25px;height:24px;background:#fdebcd;border-radius:4px;"></div>
<span style="position:absolute;left:949.80px;top:715.50px;font-size:13px;line-height:13px;font-weight:400;color:#9c6820;white-space:pre;-webkit-text-stroke:0.3px #9c6820;">C</span>
<svg style="position:absolute;left:1083px;top:714.8px;" width="23" height="12" viewBox="0 0 23 12"><rect x="0.8" y="0.5" width="21.4" height="11" rx="5.5" fill="#1a1d29"/><path d="M3.8 6.2 L6.2 8.3 L10.2 4" fill="none" stroke="#fff" stroke-width="1"/></svg>
<svg style="position:absolute;left:1120px;top:710.5px;" width="22" height="22" viewBox="0 0 22 22"><rect x="1" y="-0.2" width="21" height="2.6" fill="#1a1d29"/><circle cx="11.6" cy="12.4" r="8.6" fill="#1a1d29"/><path d="M14.2 9.6 C13.8 8.5 12.8 7.9 11.6 7.9 C10 7.9 9 8.8 9 10 C9 11.3 10.2 11.8 11.6 12.2 C13.2 12.6 14.4 13.2 14.4 14.7 C14.4 16 13.2 16.9 11.6 16.9 C10.2 16.9 9.1 16.3 8.7 15.2 M11.6 6.3 V7.9 M11.6 16.9 V18.5" fill="none" stroke="#fff" stroke-width="1.35" stroke-linecap="round"/></svg>
<svg style="position:absolute;left:1160.5px;top:709.6px;" width="17" height="23" viewBox="0 0 17 23"><path d="M8.5 22.3 C8.5 22.3 0.5 13 0.5 8.2 A8 8 0 0 1 16.5 8.2 C16.5 13 8.5 22.3 8.5 22.3 Z" fill="#1a1d29"/><circle cx="8.5" cy="7.8" r="2.4" fill="#fff"/></svg>
<div style="position:absolute;left:1193.2px;top:708.2px;width:24.3px;height:24.6px;background:transparent;border:2px solid #d7d9e4;box-sizing:border-box;border-radius:5px;"></div>
<svg style="position:absolute;left:1198.5px;top:718.0px;" width="14" height="5" viewBox="0 0 14 5"><g fill="#1a1d29"><circle cx="2.2" cy="2.5" r="1.7"/><circle cx="7" cy="2.5" r="1.7"/><circle cx="11.8" cy="2.5" r="1.7"/></g></svg>
<span style="position:absolute;left:1322.92px;top:713.11px;font-size:17px;line-height:17px;font-weight:400;color:#1f2433;white-space:pre;">5%</span>
<span style="position:absolute;left:1416.95px;top:713.11px;font-size:17px;line-height:17px;font-weight:400;color:#1f2433;white-space:pre;">$0.62</span>
<span style="position:absolute;left:1560.71px;top:713.11px;font-size:17px;line-height:17px;font-weight:400;color:#1f2433;white-space:pre;">0.72</span>
<div style="position:absolute;left:1654px;top:705.8px;width:60px;height:30px;background:transparent;border:1.5px solid #3cb77a;box-sizing:border-box;border-radius:5.5px;"></div>
<svg style="position:absolute;left:1668px;top:716.5px;" width="8" height="8" viewBox="0 0 8 8"><circle cx="4" cy="4" r="3.9" fill="#35b173"/></svg>
<span style="position:absolute;left:1689.77px;top:714.11px;font-size:17px;line-height:17px;font-weight:400;color:#1f2433;white-space:pre;">5</span>
<span style="position:absolute;left:1779.30px;top:713.11px;font-size:17px;line-height:17px;font-weight:400;color:#1f2433;letter-spacing:0.323px;white-space:pre;">Show</span>
<div style="position:absolute;left:340px;top:763.8px;width:18px;height:18px;background:transparent;border:2px solid #1f2433;box-sizing:border-box;border-radius:2px;"></div>
<svg style="position:absolute;left:376px;top:765px;" width="13" height="16" viewBox="0 0 13 16"><path d="M2.5 1.5 L9.8 8 L2.5 14.5" fill="none" stroke="#5e6b7b" stroke-width="2" stroke-linecap="round" stroke-linejoin="round"/></svg>
<span style="position:absolute;left:404.40px;top:765.61px;font-size:17px;line-height:17px;font-weight:400;color:#1f2433;white-space:pre;">pvc logi cenas</span>
<span style="position:absolute;left:712.62px;top:765.61px;font-size:17px;line-height:17px;font-weight:400;color:#1f2433;white-space:pre;">480</span>
<div style="position:absolute;left:912px;top:762px;width:25px;height:24px;background:#e8daef;border-radius:4px;"></div>
<span style="position:absolute;left:920.88px;top:768.00px;font-size:13px;line-height:13px;font-weight:400;color:#4b2f6f;white-space:pre;-webkit-text-stroke:0.3px #4b2f6f;">L</span>
<div style="position:absolute;left:942px;top:762px;width:25px;height:24px;background:#fdebcd;border-radius:4px;"></div>
<span style="position:absolute;left:949.80px;top:768.00px;font-size:13px;line-height:13px;font-weight:400;color:#9c6820;white-space:pre;-webkit-text-stroke:0.3px #9c6820;">C</span>
<svg style="position:absolute;left:1083px;top:767.3px;" width="23" height="12" viewBox="0 0 23 12"><rect x="0.8" y="0.5" width="21.4" height="11" rx="5.5" fill="#1a1d29"/><path d="M3.8 6.2 L6.2 8.3 L10.2 4" fill="none" stroke="#fff" stroke-width="1"/></svg>
<svg style="position:absolute;left:1120px;top:763px;" width="22" height="22" viewBox="0 0 22 22"><rect x="1" y="-0.2" width="21" height="2.6" fill="#1a1d29"/><circle cx="11.6" cy="12.4" r="8.6" fill="#1a1d29"/><path d="M14.2 9.6 C13.8 8.5 12.8 7.9 11.6 7.9 C10 7.9 9 8.8 9 10 C9 11.3 10.2 11.8 11.6 12.2 C13.2 12.6 14.4 13.2 14.4 14.7 C14.4 16 13.2 16.9 11.6 16.9 C10.2 16.9 9.1 16.3 8.7 15.2 M11.6 6.3 V7.9 M11.6 16.9 V18.5" fill="none" stroke="#fff" stroke-width="1.35" stroke-linecap="round"/></svg>
<svg style="position:absolute;left:1160.5px;top:762.1px;" width="17" height="23" viewBox="0 0 17 23"><path d="M8.5 22.3 C8.5 22.3 0.5 13 0.5 8.2 A8 8 0 0 1 16.5 8.2 C16.5 13 8.5 22.3 8.5 22.3 Z" fill="#1a1d29"/><circle cx="8.5" cy="7.8" r="2.4" fill="#fff"/></svg>
<div style="position:absolute;left:1193.2px;top:760.7px;width:24.3px;height:24.6px;background:transparent;border:2px solid #d7d9e4;box-sizing:border-box;border-radius:5px;"></div>
<svg style="position:absolute;left:1198.5px;top:770.5px;" width="14" height="5" viewBox="0 0 14 5"><g fill="#1a1d29"><circle cx="2.2" cy="2.5" r="1.7"/><circle cx="7" cy="2.5" r="1.7"/><circle cx="11.8" cy="2.5" r="1.7"/></g></svg>
<span style="position:absolute;left:1313.47px;top:765.61px;font-size:17px;line-height:17px;font-weight:400;color:#1f2433;white-space:pre;">35%</span>
<span style="position:absolute;left:1416.95px;top:765.61px;font-size:17px;line-height:17px;font-weight:400;color:#1f2433;white-space:pre;">$0.26</span>
<span style="position:absolute;left:1560.71px;top:765.61px;font-size:17px;line-height:17px;font-weight:400;color:#1f2433;white-space:pre;">0.76</span>
<div style="position:absolute;left:1654px;top:758.3px;width:60px;height:30px;background:transparent;border:1.5px solid #3cb77a;box-sizing:border-box;border-radius:5.5px;"></div>
<svg style="position:absolute;left:1668px;top:769px;" width="8" height="8" viewBox="0 0 8 8"><circle cx="4" cy="4" r="3.9" fill="#35b173"/></svg>
<span style="position:absolute;left:1689.77px;top:766.61px;font-size:17px;line-height:17px;font-weight:400;color:#1f2433;white-space:pre;">8</span>
<span style="position:absolute;left:1779.30px;top:765.61px;font-size:17px;line-height:17px;font-weight:400;color:#1f2433;letter-spacing:0.323px;white-space:pre;">Show</span>
<div style="position:absolute;left:340px;top:816.3px;width:18px;height:18px;background:transparent;border:2px solid #1f2433;box-sizing:border-box;border-radius:2px;"></div>
<svg style="position:absolute;left:376px;top:817.5px;" width="13" height="16" viewBox="0 0 13 16"><path d="M2.5 1.5 L9.8 8 L2.5 14.5" fill="none" stroke="#5e6b7b" stroke-width="2" stroke-linecap="round" stroke-linejoin="round"/></svg>
<span style="position:absolute;left:404.40px;top:818.11px;font-size:17px;line-height:17px;font-weight:400;color:#1f2433;white-space:pre;">logi cenas</span>
<span style="position:absolute;left:712.62px;top:818.11px;font-size:17px;line-height:17px;font-weight:400;color:#1f2433;white-space:pre;">390</span>
<div style="position:absolute;left:912px;top:814.5px;width:25px;height:24px;background:#e8daef;border-radius:4px;"></div>
<span style="position:absolute;left:920.88px;top:820.50px;font-size:13px;line-height:13px;font-weight:400;color:#4b2f6f;white-space:pre;-webkit-text-stroke:0.3px #4b2f6f;">L</span>
<div style="position:absolute;left:942px;top:814.5px;width:25px;height:24px;background:#fdebcd;border-radius:4px;"></div>
<span style="position:absolute;left:949.80px;top:820.50px;font-size:13px;line-height:13px;font-weight:400;color:#9c6820;white-space:pre;-webkit-text-stroke:0.3px #9c6820;">C</span>
<svg style="position:absolute;left:1083px;top:819.8px;" width="23" height="12" viewBox="0 0 23 12"><rect x="0.8" y="0.5" width="21.4" height="11" rx="5.5" fill="#1a1d29"/><path d="M3.8 6.2 L6.2 8.3 L10.2 4" fill="none" stroke="#fff" stroke-width="1"/></svg>
<svg style="position:absolute;left:1120px;top:815.5px;" width="22" height="22" viewBox="0 0 22 22"><rect x="1" y="-0.2" width="21" height="2.6" fill="#1a1d29"/><circle cx="11.6" cy="12.4" r="8.6" fill="#1a1d29"/><path d="M14.2 9.6 C13.8 8.5 12.8 7.9 11.6 7.9 C10 7.9 9 8.8 9 10 C9 11.3 10.2 11.8 11.6 12.2 C13.2 12.6 14.4 13.2 14.4 14.7 C14.4 16 13.2 16.9 11.6 16.9 C10.2 16.9 9.1 16.3 8.7 15.2 M11.6 6.3 V7.9 M11.6 16.9 V18.5" fill="none" stroke="#fff" stroke-width="1.35" stroke-linecap="round"/></svg>
<svg style="position:absolute;left:1160.5px;top:814.6px;" width="17" height="23" viewBox="0 0 17 23"><path d="M8.5 22.3 C8.5 22.3 0.5 13 0.5 8.2 A8 8 0 0 1 16.5 8.2 C16.5 13 8.5 22.3 8.5 22.3 Z" fill="#1a1d29"/><circle cx="8.5" cy="7.8" r="2.4" fill="#fff"/></svg>
<div style="position:absolute;left:1193.2px;top:813.2px;width:24.3px;height:24.6px;background:transparent;border:2px solid #d7d9e4;box-sizing:border-box;border-radius:5px;"></div>
<svg style="position:absolute;left:1198.5px;top:823.0px;" width="14" height="5" viewBox="0 0 14 5"><g fill="#1a1d29"><circle cx="2.2" cy="2.5" r="1.7"/><circle cx="7" cy="2.5" r="1.7"/><circle cx="11.8" cy="2.5" r="1.7"/></g></svg>
<span style="position:absolute;left:1313.47px;top:818.11px;font-size:17px;line-height:17px;font-weight:400;color:#1f2433;white-space:pre;">29%</span>
<span style="position:absolute;left:1416.95px;top:818.11px;font-size:17px;line-height:17px;font-weight:400;color:#1f2433;white-space:pre;">$0.15</span>
<span style="position:absolute;left:1560.71px;top:818.11px;font-size:17px;line-height:17px;font-weight:400;color:#1f2433;white-space:pre;">0.85</span>
<div style="position:absolute;left:1654px;top:810.8px;width:60px;height:30px;background:transparent;border:1.5px solid #3cb77a;box-sizing:border-box;border-radius:5.5px;"></div>
<svg style="position:absolute;left:1668px;top:821.5px;" width="8" height="8" viewBox="0 0 8 8"><circle cx="4" cy="4" r="3.9" fill="#35b173"/></svg>
<span style="position:absolute;left:1689.77px;top:819.11px;font-size:17px;line-height:17px;font-weight:400;color:#1f2433;white-space:pre;">8</span>
<span style="position:absolute;left:1779.30px;top:818.11px;font-size:17px;line-height:17px;font-weight:400;color:#1f2433;letter-spacing:0.323px;white-space:pre;">Show</span>
<div style="position:absolute;left:340px;top:868.8px;width:18px;height:18px;background:transparent;border:2px solid #1f2433;box-sizing:border-box;border-radius:2px;"></div>
<svg style="position:absolute;left:376px;top:870px;" width="13" height="16" viewBox="0 0 13 16"><path d="M2.5 1.5 L9.8 8 L2.5 14.5" fill="none" stroke="#5e6b7b" stroke-width="2" stroke-linecap="round" stroke-linejoin="round"/></svg>
<span style="position:absolute;left:404.40px;top:870.61px;font-size:17px;line-height:17px;font-weight:400;color:#1f2433;white-space:pre;">logi un durvis</span>
<span style="position:absolute;left:712.62px;top:870.61px;font-size:17px;line-height:17px;font-weight:400;color:#1f2433;white-space:pre;">320</span>
<div style="position:absolute;left:912px;top:867px;width:25px;height:24px;background:#e8daef;border-radius:4px;"></div>
<span style="position:absolute;left:920.88px;top:873.00px;font-size:13px;line-height:13px;font-weight:400;color:#4b2f6f;white-space:pre;-webkit-text-stroke:0.3px #4b2f6f;">L</span>
<div style="position:absolute;left:942px;top:867px;width:25px;height:24px;background:#fdebcd;border-radius:4px;"></div>
<span style="position:absolute;left:949.80px;top:873.00px;font-size:13px;line-height:13px;font-weight:400;color:#9c6820;white-space:pre;-webkit-text-stroke:0.3px #9c6820;">C</span>
<svg style="position:absolute;left:1083px;top:872.3px;" width="23" height="12" viewBox="0 0 23 12"><rect x="0.8" y="0.5" width="21.4" height="11" rx="5.5" fill="#1a1d29"/><path d="M3.8 6.2 L6.2 8.3 L10.2 4" fill="none" stroke="#fff" stroke-width="1"/></svg>
<svg style="position:absolute;left:1120px;top:868px;" width="22" height="22" viewBox="0 0 22 22"><rect x="1" y="-0.2" width="21" height="2.6" fill="#1a1d29"/><circle cx="11.6" cy="12.4" r="8.6" fill="#1a1d29"/><path d="M14.2 9.6 C13.8 8.5 12.8 7.9 11.6 7.9 C10 7.9 9 8.8 9 10 C9 11.3 10.2 11.8 11.6 12.2 C13.2 12.6 14.4 13.2 14.4 14.7 C14.4 16 13.2 16.9 11.6 16.9 C10.2 16.9 9.1 16.3 8.7 15.2 M11.6 6.3 V7.9 M11.6 16.9 V18.5" fill="none" stroke="#fff" stroke-width="1.35" stroke-linecap="round"/></svg>
<svg style="position:absolute;left:1160.5px;top:867.1px;" width="17" height="23" viewBox="0 0 17 23"><path d="M8.5 22.3 C8.5 22.3 0.5 13 0.5 8.2 A8 8 0 0 1 16.5 8.2 C16.5 13 8.5 22.3 8.5 22.3 Z" fill="#1a1d29"/><circle cx="8.5" cy="7.8" r="2.4" fill="#fff"/></svg>
<div style="position:absolute;left:1193.2px;top:865.7px;width:24.3px;height:24.6px;background:transparent;border:2px solid #d7d9e4;box-sizing:border-box;border-radius:5px;"></div>
<svg style="position:absolute;left:1198.5px;top:875.5px;" width="14" height="5" viewBox="0 0 14 5"><g fill="#1a1d29"><circle cx="2.2" cy="2.5" r="1.7"/><circle cx="7" cy="2.5" r="1.7"/><circle cx="11.8" cy="2.5" r="1.7"/></g></svg>
<span style="position:absolute;left:1313.47px;top:870.61px;font-size:17px;line-height:17px;font-weight:400;color:#1f2433;white-space:pre;">19%</span>
<span style="position:absolute;left:1416.95px;top:870.61px;font-size:17px;line-height:17px;font-weight:400;color:#1f2433;white-space:pre;">$0.15</span>
<span style="position:absolute;left:1560.71px;top:870.61px;font-size:17px;line-height:17px;font-weight:400;color:#1f2433;white-space:pre;">0.67</span>
<div style="position:absolute;left:1654px;top:863.3px;width:60px;height:30px;background:transparent;border:1.5px solid #3cb77a;box-sizing:border-box;border-radius:5.5px;"></div>
<svg style="position:absolute;left:1668px;top:874px;" width="8" height="8" viewBox="0 0 8 8"><circle cx="4" cy="4" r="3.9" fill="#35b173"/></svg>
<span style="position:absolute;left:1689.77px;top:871.61px;font-size:17px;line-height:17px;font-weight:400;color:#1f2433;white-space:pre;">2</span>
<span style="position:absolute;left:1779.30px;top:870.61px;font-size:17px;line-height:17px;font-weight:400;color:#1f2433;letter-spacing:0.323px;white-space:pre;">Show</span>
<div style="position:absolute;left:340px;top:921.3px;width:18px;height:18px;background:transparent;border:2px solid #1f2433;box-sizing:border-box;border-radius:2px;"></div>
<svg style="position:absolute;left:376px;top:922.5px;" width="13" height="16" viewBox="0 0 13 16"><path d="M2.5 1.5 L9.8 8 L2.5 14.5" fill="none" stroke="#5e6b7b" stroke-width="2" stroke-linecap="round" stroke-linejoin="round"/></svg>
<span style="position:absolute;left:404.40px;top:923.11px;font-size:17px;line-height:17px;font-weight:400;color:#1f2433;white-space:pre;">logus</span>
<span style="position:absolute;left:712.62px;top:923.11px;font-size:17px;line-height:17px;font-weight:400;color:#1f2433;white-space:pre;">300</span>
<div style="position:absolute;left:912px;top:919.5px;width:25px;height:24px;background:#e8daef;border-radius:4px;"></div>
<span style="position:absolute;left:920.88px;top:925.50px;font-size:13px;line-height:13px;font-weight:400;color:#4b2f6f;white-space:pre;-webkit-text-stroke:0.3px #4b2f6f;">L</span>
<div style="position:absolute;left:942px;top:919.5px;width:25px;height:24px;background:#fdebcd;border-radius:4px;"></div>
<span style="position:absolute;left:949.80px;top:925.50px;font-size:13px;line-height:13px;font-weight:400;color:#9c6820;white-space:pre;-webkit-text-stroke:0.3px #9c6820;">C</span>
<svg style="position:absolute;left:1083px;top:924.8px;" width="23" height="12" viewBox="0 0 23 12"><rect x="0.8" y="0.5" width="21.4" height="11" rx="5.5" fill="#1a1d29"/><path d="M3.8 6.2 L6.2 8.3 L10.2 4" fill="none" stroke="#fff" stroke-width="1"/></svg>
<svg style="position:absolute;left:1120px;top:920.5px;" width="22" height="22" viewBox="0 0 22 22"><rect x="1" y="-0.2" width="21" height="2.6" fill="#1a1d29"/><circle cx="11.6" cy="12.4" r="8.6" fill="#1a1d29"/><path d="M14.2 9.6 C13.8 8.5 12.8 7.9 11.6 7.9 C10 7.9 9 8.8 9 10 C9 11.3 10.2 11.8 11.6 12.2 C13.2 12.6 14.4 13.2 14.4 14.7 C14.4 16 13.2 16.9 11.6 16.9 C10.2 16.9 9.1 16.3 8.7 15.2 M11.6 6.3 V7.9 M11.6 16.9 V18.5" fill="none" stroke="#fff" stroke-width="1.35" stroke-linecap="round"/></svg>
<svg style="position:absolute;left:1160.5px;top:919.6px;" width="17" height="23" viewBox="0 0 17 23"><path d="M8.5 22.3 C8.5 22.3 0.5 13 0.5 8.2 A8 8 0 0 1 16.5 8.2 C16.5 13 8.5 22.3 8.5 22.3 Z" fill="#1a1d29"/><circle cx="8.5" cy="7.8" r="2.4" fill="#fff"/></svg>
<div style="position:absolute;left:1193.2px;top:918.2px;width:24.3px;height:24.6px;background:transparent;border:2px solid #d7d9e4;box-sizing:border-box;border-radius:5px;"></div>
<svg style="position:absolute;left:1198.5px;top:928.0px;" width="14" height="5" viewBox="0 0 14 5"><g fill="#1a1d29"><circle cx="2.2" cy="2.5" r="1.7"/><circle cx="7" cy="2.5" r="1.7"/><circle cx="11.8" cy="2.5" r="1.7"/></g></svg>
<span style="position:absolute;left:1313.47px;top:923.11px;font-size:17px;line-height:17px;font-weight:400;color:#1f2433;white-space:pre;">20%</span>
<span style="position:absolute;left:1416.95px;top:923.11px;font-size:17px;line-height:17px;font-weight:400;color:#1f2433;white-space:pre;">$0.10</span>
<span style="position:absolute;left:1560.71px;top:923.11px;font-size:17px;line-height:17px;font-weight:400;color:#1f2433;white-space:pre;">0.83</span>
<div style="position:absolute;left:1654px;top:915.8px;width:60px;height:30px;background:transparent;border:1.5px solid #3cb77a;box-sizing:border-box;border-radius:5.5px;"></div>
<svg style="position:absolute;left:1668px;top:926.5px;" width="8" height="8" viewBox="0 0 8 8"><circle cx="4" cy="4" r="3.9" fill="#35b173"/></svg>
<span style="position:absolute;left:1689.77px;top:924.11px;font-size:17px;line-height:17px;font-weight:400;color:#1f2433;white-space:pre;">4</span>
<span style="position:absolute;left:1779.30px;top:923.11px;font-size:17px;line-height:17px;font-weight:400;color:#1f2433;letter-spacing:0.323px;white-space:pre;">Show</span>
<svg style="position:absolute;left:775px;top:488px;" width="110" height="44" viewBox="0 0 1909 764"><path d="M140,640 L140,545 L265,425 L315,435 L350,295 L395,380 L435,380 L475,155 L515,225 L1320,165 L1355,215 L1400,310 L1445,310 L1480,215 L1520,300 L1560,300 L1640,440 L1695,295 L1740,380 L1785,300 L1785,640 Z" fill="#e5eff9"/><polyline points="140,545 265,425 315,435 350,295 395,380 435,380 475,155 515,225 1320,165 1355,215 1400,310 1445,310 1480,215 1520,300 1560,300 1640,440 1695,295 1740,380 1785,300" fill="none" stroke="#1e70d0" stroke-width="27" stroke-linejoin="miter" stroke-miterlimit="3"/></svg>
<svg style="position:absolute;left:775px;top:541px;" width="110" height="44" viewBox="0 0 1909 764"><path d="M140,620 L140,385 L200,355 L270,355 L290,220 L340,295 L360,235 L455,235 L480,255 L510,300 L525,365 L565,290 L625,290 L660,525 L685,235 L735,235 L755,150 L790,235 L850,235 L880,265 L905,300 L920,385 L960,360 L995,355 L1015,145 L1055,235 L1110,235 L1155,155 L1180,230 L1215,235 L1240,275 L1270,355 L1310,355 L1345,275 L1380,360 L1430,235 L1480,235 L1500,370 L1575,235 L1600,235 L1645,290 L1670,350 L1710,385 L1740,355 L1785,355 L1785,620 Z" fill="#e5eff9"/><polyline points="140,385 200,355 270,355 290,220 340,295 360,235 455,235 480,255 510,300 525,365 565,290 625,290 660,525 685,235 735,235 755,150 790,235 850,235 880,265 905,300 920,385 960,360 995,355 1015,145 1055,235 1110,235 1155,155 1180,230 1215,235 1240,275 1270,355 1310,355 1345,275 1380,360 1430,235 1480,235 1500,370 1575,235 1600,235 1645,290 1670,350 1710,385 1740,355 1785,355" fill="none" stroke="#1e70d0" stroke-width="27" stroke-linejoin="miter" stroke-miterlimit="3"/></svg>
<svg style="position:absolute;left:775px;top:593.5px;" width="110" height="44" viewBox="0 0 1909 764"><path d="M140,635 L140,515 L175,545 L240,460 L375,460 L405,175 L440,420 L480,350 L1125,350 L1155,405 L1300,405 L1330,460 L1375,460 L1395,525 L1430,465 L1465,540 L1490,405 L1550,405 L1610,470 L1680,395 L1745,460 L1785,460 L1785,635 Z" fill="#e5eff9"/><polyline points="140,515 175,545 240,460 375,460 405,175 440,420 480,350 1125,350 1155,405 1300,405 1330,460 1375,460 1395,525 1430,465 1465,540 1490,405 1550,405 1610,470 1680,395 1745,460 1785,460" fill="none" stroke="#1e70d0" stroke-width="27" stroke-linejoin="miter" stroke-miterlimit="3"/></svg>
<svg style="position:absolute;left:775px;top:646px;" width="110" height="44" viewBox="0 0 1909 764"><path d="M140,620 L140,490 L240,530 L335,530 L375,445 L405,450 L440,330 L475,390 L920,255 L985,390 L1060,390 L1085,255 L1150,255 L1200,345 L1250,255 L1305,255 L1325,350 L1375,240 L1400,440 L1430,340 L1530,340 L1555,255 L1630,255 L1665,165 L1710,165 L1740,260 L1785,260 L1785,620 Z" fill="#e5eff9"/><polyline points="140,490 240,530 335,530 375,445 405,450 440,330 475,390 920,255 985,390 1060,390 1085,255 1150,255 1200,345 1250,255 1305,255 1325,350 1375,240 1400,440 1430,340 1530,340 1555,255 1630,255 1665,165 1710,165 1740,260 1785,260" fill="none" stroke="#1e70d0" stroke-width="27" stroke-linejoin="miter" stroke-miterlimit="3"/></svg>
<svg style="position:absolute;left:775px;top:698.5px;" width="110" height="44" viewBox="0 0 1909 764"><path d="M140,635 L140,545 L675,170 L1220,170 L1785,375 L1785,635 Z" fill="#e5eff9"/><polyline points="140,545 675,170 1220,170 1785,375" fill="none" stroke="#1e70d0" stroke-width="27" stroke-linejoin="miter" stroke-miterlimit="3"/></svg>
<svg style="position:absolute;left:775px;top:751px;" width="110" height="44" viewBox="0 0 1909 764"><path d="M140,620 L140,500 L175,525 L205,490 L240,490 L270,445 L315,450 L375,415 L395,415 L430,310 L460,365 L745,420 L770,305 L810,375 L840,235 L875,305 L910,315 L935,370 L965,260 L1000,240 L1030,150 L1070,245 L1125,245 L1165,170 L1200,170 L1225,245 L1260,250 L1280,355 L1325,425 L1355,365 L1410,365 L1450,315 L1515,315 L1545,245 L1575,245 L1620,320 L1660,485 L1710,505 L1735,370 L1785,370 L1785,620 Z" fill="#e5eff9"/><polyline points="140,500 175,525 205,490 240,490 270,445 315,450 375,415 395,415 430,310 460,365 745,420 770,305 810,375 840,235 875,305 910,315 935,370 965,260 1000,240 1030,150 1070,245 1125,245 1165,170 1200,170 1225,245 1260,250 1280,355 1325,425 1355,365 1410,365 1450,315 1515,315 1545,245 1575,245 1620,320 1660,485 1710,505 1735,370 1785,370" fill="none" stroke="#1e70d0" stroke-width="27" stroke-linejoin="miter" stroke-miterlimit="3"/></svg>
<svg style="position:absolute;left:775px;top:803.5px;" width="110" height="44" viewBox="0 0 1909 764"><path d="M140,635 L140,465 L185,405 L355,405 L395,350 L425,165 L470,165 L515,265 L1320,265 L1360,155 L1395,285 L1435,165 L1480,165 L1520,265 L1560,405 L1600,405 L1640,545 L1735,545 L1785,495 L1785,635 Z" fill="#e5eff9"/><polyline points="140,465 185,405 355,405 395,350 425,165 470,165 515,265 1320,265 1360,155 1395,285 1435,165 1480,165 1520,265 1560,405 1600,405 1640,545 1735,545 1785,495" fill="none" stroke="#1e70d0" stroke-width="27" stroke-linejoin="miter" stroke-miterlimit="3"/></svg>
<svg style="position:absolute;left:775px;top:856px;" width="110" height="44" viewBox="0 0 1909 764"><path d="M140,620 L140,530 L270,470 L310,475 L345,420 L395,420 L425,270 L475,270 L515,350 L1315,270 L1395,275 L1440,155 L1480,275 L1520,135 L1560,420 L1600,420 L1640,485 L1705,410 L1740,355 L1785,355 L1785,620 Z" fill="#e5eff9"/><polyline points="140,530 270,470 310,475 345,420 395,420 425,270 475,270 515,350 1315,270 1395,275 1440,155 1480,275 1520,135 1560,420 1600,420 1640,485 1705,410 1740,355 1785,355" fill="none" stroke="#1e70d0" stroke-width="27" stroke-linejoin="miter" stroke-miterlimit="3"/></svg>
<svg style="position:absolute;left:775px;top:908.5px;" width="110" height="44" viewBox="0 0 1909 764"><path d="M140,620 L140,545 L1040,545 L1270,297 L1400,157 L1585,157 L1785,287 L1785,620 Z" fill="#e5eff9"/><polyline points="140,545 1040,545 1270,297 1400,157 1585,157 1785,287" fill="none" stroke="#1e70d0" stroke-width="27" stroke-linejoin="miter" stroke-miterlimit="3"/></svg>
</body></html>
